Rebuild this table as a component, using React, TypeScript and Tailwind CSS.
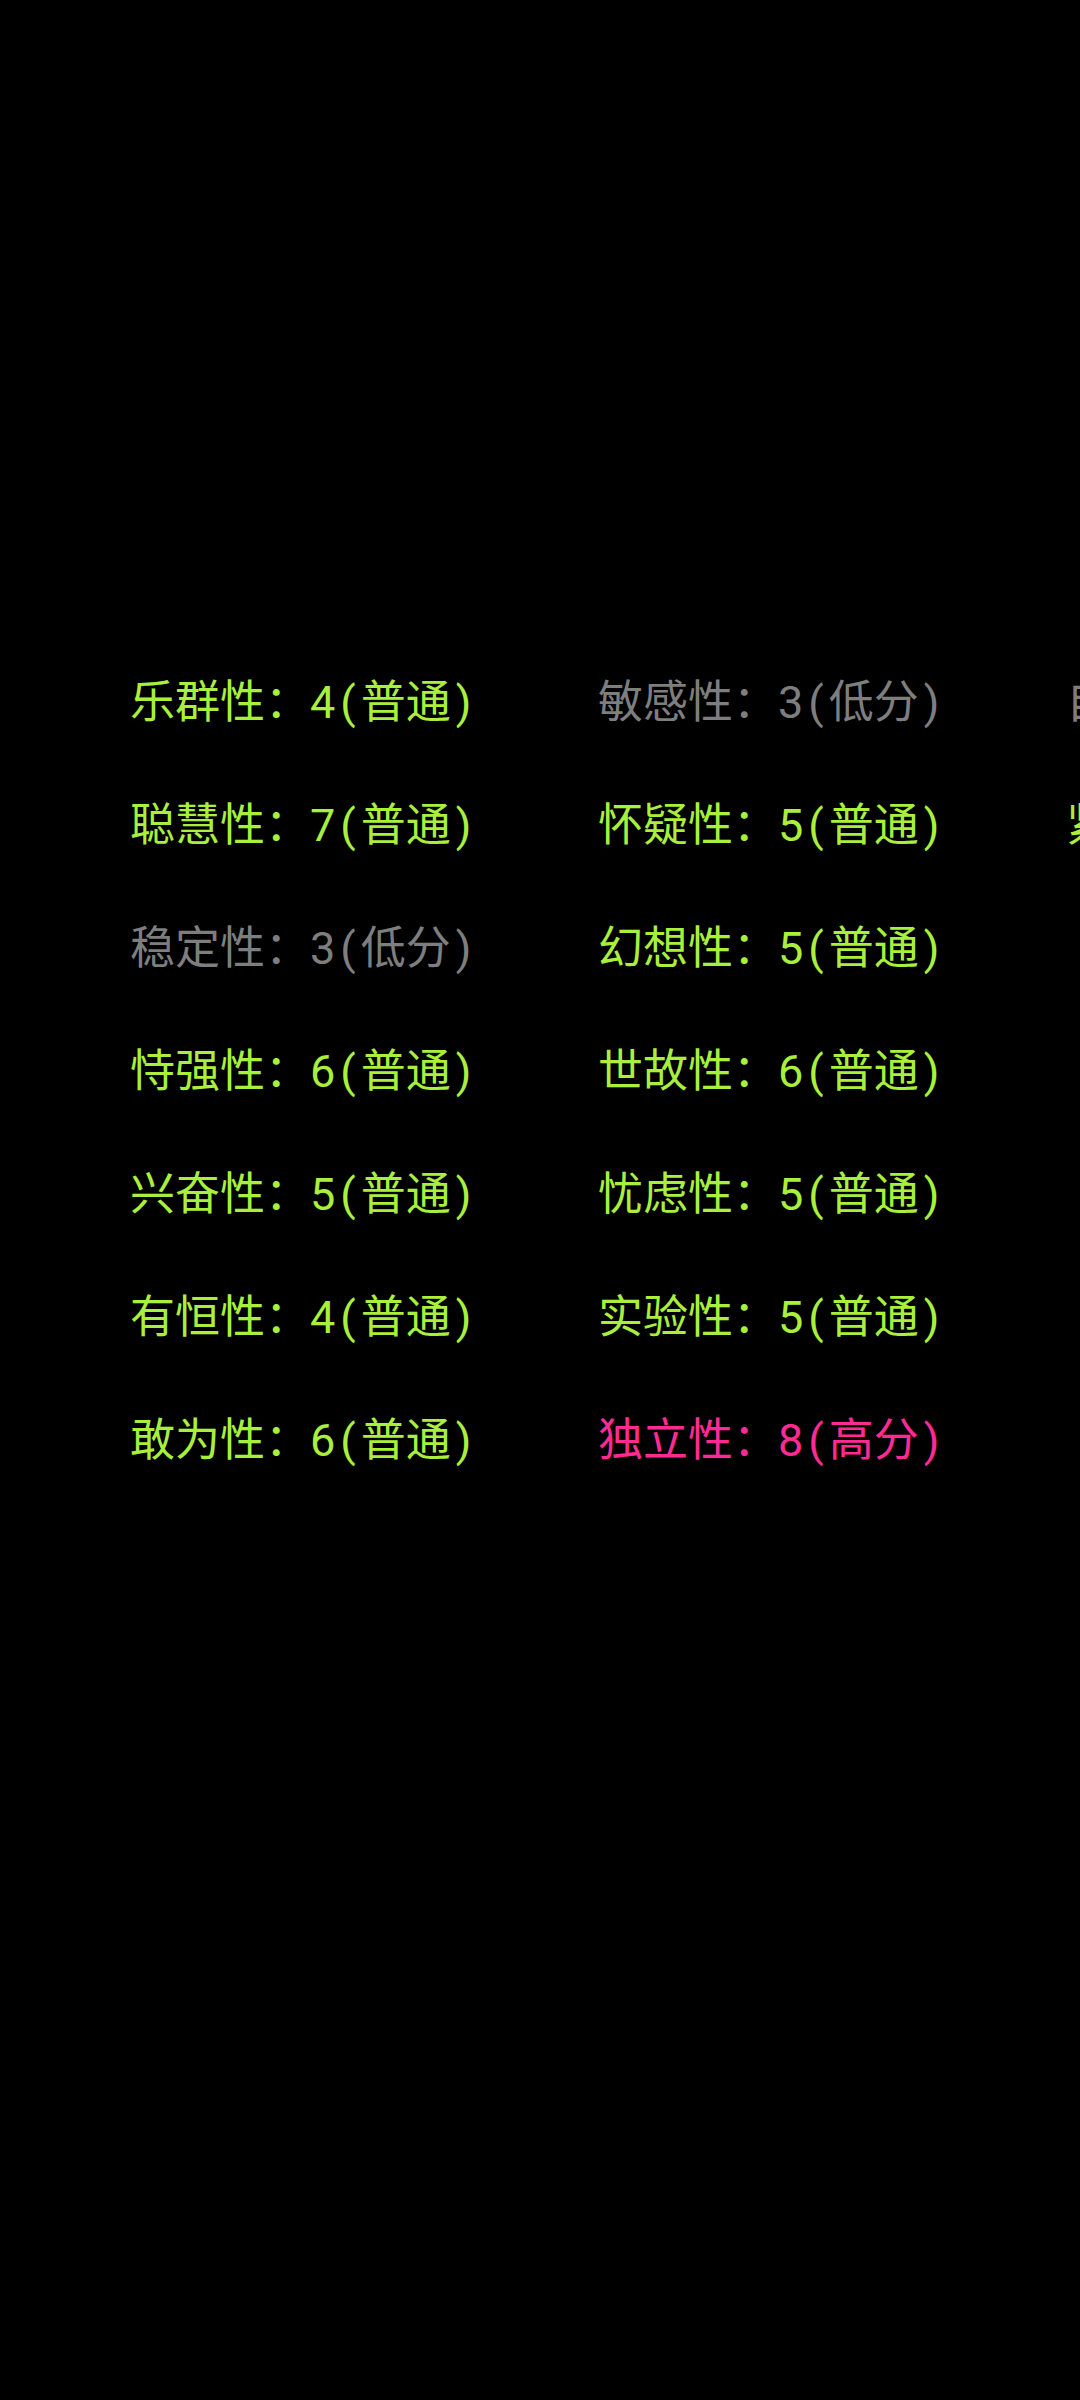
const factors = [
  { name: "乐群性", score: 4, level: "普通" },
  { name: "聪慧性", score: 7, level: "普通" },
  { name: "稳定性", score: 3, level: "低分" },
  { name: "恃强性", score: 6, level: "普通" },
  { name: "兴奋性", score: 5, level: "普通" },
  { name: "有恒性", score: 4, level: "普通" },
  { name: "敢为性", score: 6, level: "普通" },
  { name: "敏感性", score: 3, level: "低分" },
  { name: "怀疑性", score: 5, level: "普通" },
  { name: "幻想性", score: 5, level: "普通" },
  { name: "世故性", score: 6, level: "普通" },
  { name: "忧虑性", score: 5, level: "普通" },
  { name: "实验性", score: 5, level: "普通" },
  { name: "独立性", score: 8, level: "高分" },
  { name: "自律性", score: 3, level: "低分" },
  { name: "紧张性", score: 5, level: "普通" },
];

const levelColor: Record<string, string> = {
  低分: "text-[#7e7e7e]",
  普通: "text-[#a8f03c]",
  高分: "text-[#ff2a93]",
};

export default function App() {
  // 7 items per column, columns overflow off to the right
  const columns = [factors.slice(0, 7), factors.slice(7, 14), factors.slice(14)];

  return (
    <div
      className="w-[1080px] h-[2400px] bg-black overflow-hidden"
      style={{ fontFamily: 'Roboto, "Noto Sans CJK SC", sans-serif' }}
    >
      <div className="flex pt-[641px] pl-[130px]">
        {columns.map((col, i) => (
          <div key={i} className="w-[468px] shrink-0 flex flex-col">
            {col.map((f) => (
              <div
                key={f.name}
                className={`h-[123px] flex items-center whitespace-nowrap text-[45px] leading-none ${levelColor[f.level]}`}
              >
                {f.name}：{f.score}
                <span className="ml-[5px] mr-[5px]">(</span>
                {f.level}
                <span className="ml-[5px]">)</span>
              </div>
            ))}
          </div>
        ))}
      </div>
    </div>
  );
}
